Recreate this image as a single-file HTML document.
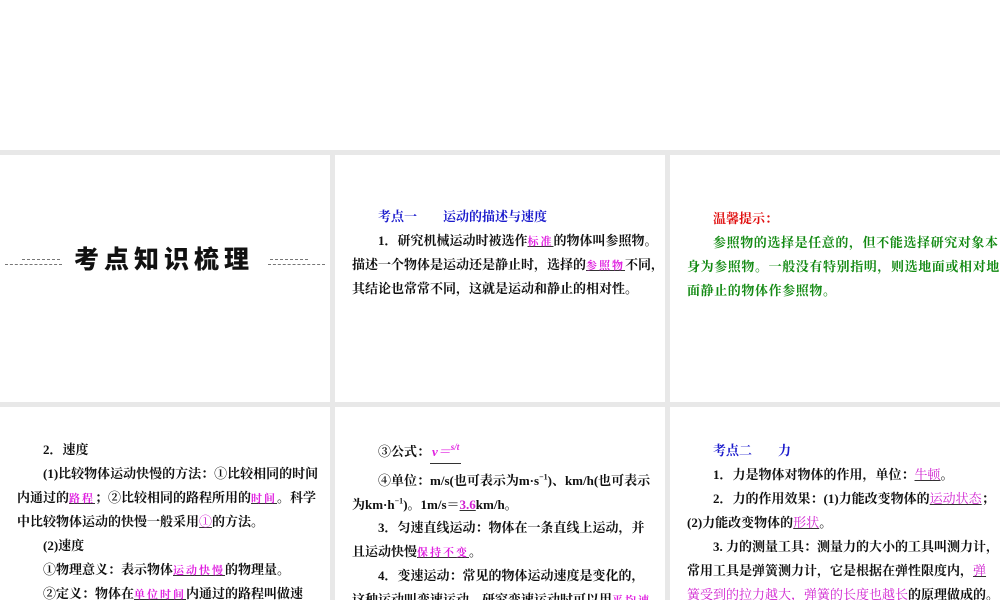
<!DOCTYPE html>
<html><head><meta charset="utf-8"><style>
body{margin:0;width:1000px;height:600px;background:#fff;position:relative;overflow:hidden;font-family:"Liberation Serif","Noto Serif CJK SC",serif;}
.bg{position:absolute;left:0;top:150px;width:1000px;height:450px;background:#e8e8e8}
.p{position:absolute;background:#fff;overflow:hidden}
.l{position:absolute;white-space:nowrap;font-size:13px;line-height:24px;font-weight:bold;color:#111}
.b{color:#1a1acc}
.m{color:#e020e0;text-decoration:underline;text-decoration-color:#333;font-weight:bold;font-size:11px;letter-spacing:2px}
.u{color:#d020d0;text-decoration:underline;text-decoration-color:#333;font-weight:normal}
.g{color:#138a13;letter-spacing:0.6px}
sup{line-height:0;font-size:8px}
.d{position:absolute;height:4px;border-top:1px dashed #777;border-bottom:1px dashed #777}
</style></head><body>
<div class="bg"></div>
<div class="p" style="left:0;top:155px;width:330px;height:247px">
 <div class="d" style="left:22px;top:104px;width:38px;height:3px;border-bottom:none"></div>
 <div class="d" style="left:5px;top:109px;width:57px;height:0;border-bottom:none"></div>
 <div class="d" style="left:270px;top:104px;width:38px;height:3px;border-bottom:none"></div>
 <div class="d" style="left:268px;top:109px;width:57px;height:0;border-bottom:none"></div>
 <div style="position:absolute;left:74px;top:89px;font-family:'Liberation Sans','Noto Sans CJK SC',sans-serif;font-weight:900;font-size:25px;letter-spacing:5px;color:#111;line-height:32px">考点知识梳理</div>
</div>
<div class="p" style="left:335px;top:155px;width:330px;height:247px">
 <div class="l b" style="left:43px;top:50px">考点一　　运动的描述与速度</div>
 <div class="l" style="left:43px;top:74px">1．研究机械运动时被选作<span class="m">标准</span>的物体叫参照物。</div>
 <div class="l" style="left:17px;top:98px">描述一个物体是运动还是静止时，选择的<span class="m">参照物</span>不同，</div>
 <div class="l" style="left:17px;top:122px">其结论也常常不同，这就是运动和静止的相对性。</div>
</div>
<div class="p" style="left:670px;top:155px;width:330px;height:247px">
 <div class="l" style="left:43px;top:52px;color:#e01010">温馨提示：</div>
 <div class="l g" style="left:43px;top:76px">参照物的选择是任意的，但不能选择研究对象本</div>
 <div class="l g" style="left:17px;top:100px">身为参照物。一般没有特别指明，则选地面或相对地</div>
 <div class="l g" style="left:17px;top:124px">面静止的物体作参照物。</div>
</div>
<div class="p" style="left:0;top:407px;width:330px;height:193px">
 <div class="l" style="left:43px;top:31px">2．速度</div>
 <div class="l" style="left:43px;top:55px">(1)比较物体运动快慢的方法：①比较相同的时间</div>
 <div class="l" style="left:17px;top:79px">内通过的<span class="m">路程</span>；②比较相同的路程所用的<span class="m">时间</span>。科学</div>
 <div class="l" style="left:17px;top:103px">中比较物体运动的快慢一般采用<span class="u">①</span>的方法。</div>
 <div class="l" style="left:43px;top:127px">(2)速度</div>
 <div class="l" style="left:43px;top:151px">①物理意义：表示物体<span class="m">运动快慢</span>的物理量。</div>
 <div class="l" style="left:43px;top:175px">②定义：物体在<span class="m">单位时间</span>内通过的路程叫做速</div>
</div>
<div class="p" style="left:335px;top:407px;width:330px;height:193px">
 <div class="l" style="left:43px;top:33px">③公式：<span style="color:#e020e0;font-style:italic;border-bottom:1px solid #333;padding:0 2px 4px 2px">v＝<span style="font-size:9px;position:relative;top:-6px">s/t</span></span></div>
 <div class="l" style="left:43px;top:62px">④单位：m/s(也可表示为m·s<sup>−1</sup>)、km/h(也可表示</div>
 <div class="l" style="left:17px;top:86px">为km·h<sup>−1</sup>)。1m/s＝<span class="u" style="font-weight:bold">3.6</span>km/h。</div>
 <div class="l" style="left:43px;top:109px">3．匀速直线运动：物体在一条直线上运动，并</div>
 <div class="l" style="left:17px;top:133px">且运动快慢<span class="m">保持不变</span>。</div>
 <div class="l" style="left:43px;top:157px">4．变速运动：常见的物体运动速度是变化的，</div>
 <div class="l" style="left:17px;top:181px">这种运动叫变速运动。研究变速运动时可以用<span class="m">平均速</span></div>
</div>
<div class="p" style="left:670px;top:407px;width:330px;height:193px">
 <div class="l b" style="left:43px;top:32px">考点二　　力</div>
 <div class="l" style="left:43px;top:56px">1．力是物体对物体的作用，单位：<span class="u">牛顿</span>。</div>
 <div class="l" style="left:43px;top:80px">2．力的作用效果：(1)力能改变物体的<span class="u">运动状态</span>；</div>
 <div class="l" style="left:17px;top:104px">(2)力能改变物体的<span class="u">形状</span>。</div>
 <div class="l" style="left:43px;top:128px">3. 力的测量工具：测量力的大小的工具叫测力计，</div>
 <div class="l" style="left:17px;top:152px">常用工具是弹簧测力计，它是根据在弹性限度内，<span class="u">弹</span></div>
 <div class="l" style="left:17px;top:176px"><span class="u">簧受到的拉力越大，弹簧的长度也越长</span>的原理做成的。</div>
</div>
</body></html>
